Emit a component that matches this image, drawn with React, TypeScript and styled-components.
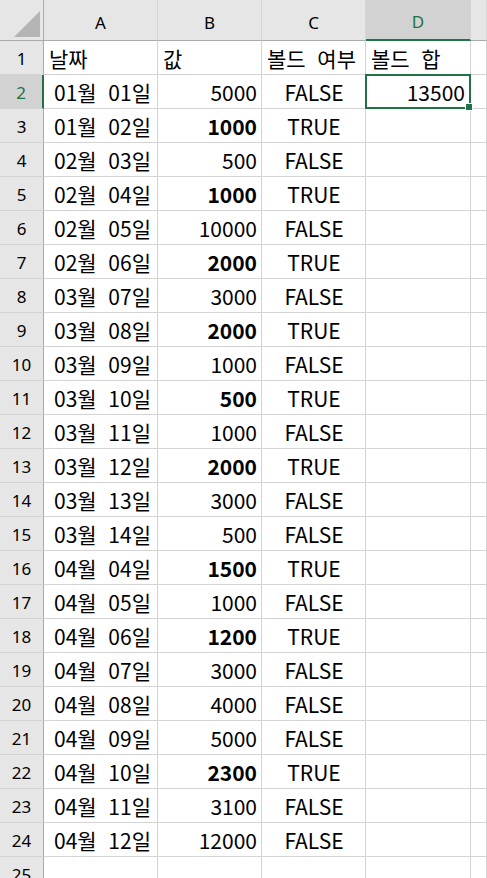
import React from "react";
import styled, { createGlobalStyle } from "styled-components";

const GlobalStyle = createGlobalStyle`
  html, body {
    margin: 0;
    padding: 0;
    background: #ffffff;
    overflow: hidden;
  }
  body {
    font-family: "Noto Sans CJK KR", "Noto Sans", sans-serif;
  }
`;

const colors = {
  grid: "#d4d4d4",
  headerBg: "#e6e6e6",
  headerLine: "#ababab",
  selectedBg: "#d2d2d2",
  green: "#217346",
};

type Row = [string, string, boolean];

const rows: Row[] = [
  ["01월 01일", "5000", false],
  ["01월 02일", "1000", true],
  ["02월 03일", "500", false],
  ["02월 04일", "1000", true],
  ["02월 05일", "10000", false],
  ["02월 06일", "2000", true],
  ["03월 07일", "3000", false],
  ["03월 08일", "2000", true],
  ["03월 09일", "1000", false],
  ["03월 10일", "500", true],
  ["03월 11일", "1000", false],
  ["03월 12일", "2000", true],
  ["03월 13일", "3000", false],
  ["03월 14일", "500", false],
  ["04월 04일", "1500", true],
  ["04월 05일", "1000", false],
  ["04월 06일", "1200", true],
  ["04월 07일", "3000", false],
  ["04월 08일", "4000", false],
  ["04월 09일", "5000", false],
  ["04월 10일", "2300", true],
  ["04월 11일", "3100", false],
  ["04월 12일", "12000", false],
];

const columns = ["A", "B", "C", "D"];

export default function App() {
  return (
    <>
      <GlobalStyle />
      <Sheet>
        <Corner>
          <CornerTriangle />
        </Corner>
        {columns.map((c) => (
          <ColHeader key={c} $selected={c === "D"}>
            {c}
          </ColHeader>
        ))}
        <ColHeader $selected={false} />

        <RowHeader $selected={false}>1</RowHeader>
        <Cell>날짜</Cell>
        <Cell>값</Cell>
        <Cell>볼드 여부</Cell>
        <Cell>볼드 합</Cell>
        <Cell />

        {rows.map(([date, value, bold], i) => {
          const n = i + 2;
          return (
            <React.Fragment key={n}>
              <RowHeader $selected={n === 2}>{n}</RowHeader>
              <DateCell>{date}</DateCell>
              <Cell $align="right" $bold={bold}>
                {value}
              </Cell>
              <Cell $align="center">{bold ? "TRUE" : "FALSE"}</Cell>
              {n === 2 ? (
                <ActiveCell>
                  13500
                  <FillHandle />
                </ActiveCell>
              ) : (
                <Cell />
              )}
              <Cell />
            </React.Fragment>
          );
        })}

        <RowHeader $selected={false}>25</RowHeader>
        <Cell />
        <Cell />
        <Cell />
        <Cell />
        <Cell />
      </Sheet>
    </>
  );
}

const Sheet = styled.div`
  display: grid;
  grid-template-columns: 44px 114px 104px 104px 105px 1fr;
  grid-template-rows: 41px repeat(25, 34px);
  width: 487px;
  height: 878px;
  overflow: hidden;
`;

const Corner = styled.div`
  position: relative;
  background: ${colors.headerBg};
  border-right: 1px solid ${colors.headerLine};
  border-bottom: 1px solid ${colors.headerLine};
`;

const CornerTriangle = styled.div`
  position: absolute;
  right: 3px;
  bottom: 3px;
  width: 26px;
  height: 26px;
  background: #b4b4b4;
  clip-path: polygon(100% 0, 100% 100%, 0 100%);
`;

const ColHeader = styled.div<{ $selected: boolean }>`
  display: flex;
  align-items: center;
  justify-content: center;
  padding-top: 4px;
  box-sizing: border-box;
  font-family: "Noto Sans", sans-serif;
  font-size: 17px;
  color: ${(p) => (p.$selected ? colors.green : "#000")};
  background: ${(p) => (p.$selected ? colors.selectedBg : colors.headerBg)};
  border-right: 1px solid ${colors.grid};
  border-bottom: ${(p) =>
    p.$selected ? `2px solid ${colors.green}` : `1px solid ${colors.headerLine}`};
`;

const RowHeader = styled.div<{ $selected: boolean }>`
  display: flex;
  align-items: center;
  justify-content: center;
  padding-top: 2px;
  box-sizing: border-box;
  font-family: "Noto Sans", sans-serif;
  font-size: 17px;
  color: ${(p) => (p.$selected ? colors.green : "#000")};
  background: ${(p) => (p.$selected ? colors.selectedBg : colors.headerBg)};
  border-bottom: 1px solid ${colors.grid};
  border-right: ${(p) =>
    p.$selected ? `2px solid ${colors.green}` : `1px solid ${colors.headerLine}`};
`;

const Cell = styled.div<{ $align?: "left" | "right" | "center"; $bold?: boolean }>`
  display: flex;
  align-items: center;
  justify-content: ${(p) =>
    p.$align === "right" ? "flex-end" : p.$align === "center" ? "center" : "flex-start"};
  padding: 1px 4px 0 5px;
  box-sizing: border-box;
  font-size: 21px;
  word-spacing: 7px;
  font-weight: ${(p) => (p.$bold ? 700 : 400)};
  color: #000;
  white-space: nowrap;
  overflow: hidden;
  border-right: 1px solid ${colors.grid};
  border-bottom: 1px solid ${colors.grid};
`;

const DateCell = styled(Cell)`
  padding-left: 10px;
`;

const ActiveCell = styled(Cell)`
  position: relative;
  justify-content: flex-end;
  overflow: visible;
  margin: -1px 0 0 -1px;
  border: 2px solid ${colors.green};
`;

const FillHandle = styled.span`
  position: absolute;
  right: -4px;
  bottom: -4px;
  width: 6px;
  height: 6px;
  background: ${colors.green};
  border: 1px solid #fff;
`;
